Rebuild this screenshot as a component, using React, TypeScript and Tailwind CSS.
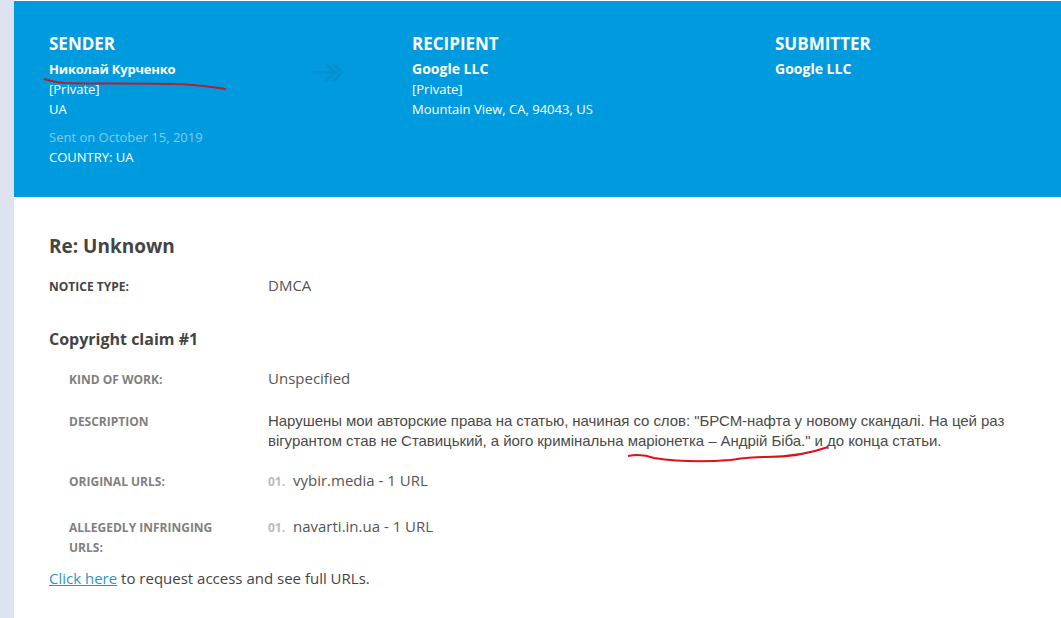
const open = "font-['Open_Sans',sans-serif]";

function Party({ title, name, lines }: { title: string; name: string; lines: string[] }) {
  return (
    <div className="w-[363px] shrink-0">
      <h2 className="text-[17px] leading-[22px] font-bold text-white">{title}</h2>
      <div className="mt-[4px] text-[14px] leading-[20px] font-bold text-white">{name}</div>
      {lines.map((l) => (
        <div key={l} className="text-[13px] leading-[20px] text-white">{l}</div>
      ))}
    </div>
  );
}

function Row({ label, className, children }: { label: string; className?: string; children: React.ReactNode }) {
  return (
    <div className={`flex pl-[20px] ${className ?? ""}`}>
      <div className="w-[200px] shrink-0 pr-6 text-[12px] leading-[20px] font-bold text-[#7f7f7f]">{label}</div>
      {children}
    </div>
  );
}

function UrlItem({ text, className }: { text: string; className: string }) {
  return (
    <div className={`flex items-baseline text-[15px] leading-[20px] text-[#555] ${className}`}>
      <span className="w-[25px] text-[12px] font-bold text-[#bbb]">01.</span>
      <span>{text}</span>
    </div>
  );
}

export default function App() {
  return (
    <div className={`relative flex h-[618px] w-[1061px] overflow-hidden bg-white ${open}`}>
      <div className="w-[14px] shrink-0 bg-[#dde4ef]" />
      <main className="flex min-w-0 flex-1 flex-col">
        <header className="mt-px flex h-[196px] bg-[#009bdf] pl-[35px] pt-[32px]">
          <div className="flex">
            <div className="w-[363px] shrink-0">
              <h2 className="text-[17px] leading-[22px] font-bold text-white">SENDER</h2>
              <div className="mt-[4px] text-[13px] leading-[20px] font-bold tracking-[-0.2px] text-white">Николай Курченко</div>
              <div className="text-[13px] leading-[20px] text-white">[Private]</div>
              <div className="text-[13px] leading-[20px] text-white">UA</div>
              <div className="mt-[8px] text-[13px] leading-[20px] text-[#7fcdef]">Sent on October 15, 2019</div>
              <div className="text-[13px] leading-[20px] text-white">COUNTRY: UA</div>
            </div>
            <Party title="RECIPIENT" name="Google LLC" lines={["[Private]", "Mountain View, CA, 94043, US"]} />
            <Party title="SUBMITTER" name="Google LLC" lines={[]} />
          </div>
        </header>
        <section className="flex flex-col pl-[35px] pr-[20px] pt-[38px]">
          <h1 className="text-[19px] leading-[22px] font-bold text-[#444]">Re: Unknown</h1>
          <div className="mt-[18px] flex">
            <div className="mt-px w-[220px] shrink-0 text-[12px] leading-[22px] font-bold text-[#444]">NOTICE TYPE:</div>
            <div className="-ml-px -mt-px text-[15px] leading-[22px] text-[#555]">DMCA</div>
          </div>
          <h3 className="mt-[30px] text-[16px] leading-[22px] font-bold text-[#444]">Copyright claim #1</h3>
          <Row label="KIND OF WORK:" className="mt-[20px]">
            <div className="-ml-px -mt-[3px] text-[15px] leading-[22px] text-[#555]">Unspecified</div>
          </Row>
          <Row label="DESCRIPTION" className="mt-[22px]">
            <p className="-ml-px -mt-px font-['Liberation_Sans',sans-serif] text-[15px] leading-[20px] tracking-[-0.05px] text-[#4a4a4a]">
              Нарушены мои авторские права на статью, начиная со слов: "БРСМ-нафта у новому скандалі. На цей раз
              <br />
              вігурантом став не Ставицький, а його кримінальна маріонетка – Андрій Біба." и до конца статьи.
            </p>
          </Row>
          <Row label="ORIGINAL URLS:" className="mt-[21px]">
            <UrlItem text="vybir.media - 1 URL" className="-ml-px -mt-[2px]" />
          </Row>
          <Row label="ALLEGEDLY INFRINGING URLS:" className="mt-[26px]">
            <UrlItem text="navarti.in.ua - 1 URL" className="-ml-px -mt-[2px]" />
          </Row>
          <p className="mt-[10px] text-[15px] leading-[20px] text-[#444]">
            <a className="text-[#2f94c4] underline">Click here</a> to request access and see full URLs.
          </p>
        </section>
      </main>
      <svg className="pointer-events-none absolute left-0 top-0" width="1061" height="618" fill="none">
        <g stroke="#0a8ccb" strokeWidth="3" opacity="0.75">
          <path d="M312 72.5h26" />
          <path d="M326 64l9 8.5-9 8.5" />
          <path d="M333 64l9 8.5-9 8.5" />
        </g>
        <path d="M44 79c8 2 10 3 20 4c30 1 70 0 110 1c20 0 36 3 52 5" stroke="#b5202f" strokeWidth="2" />
        <path d="M628 456c10-2 18-1 26 2c20 3 50 4 76 2c14-2 20-3 36-3c22 0 40-2 62-10" stroke="#e0101a" strokeWidth="2" />
      </svg>
    </div>
  );
}
